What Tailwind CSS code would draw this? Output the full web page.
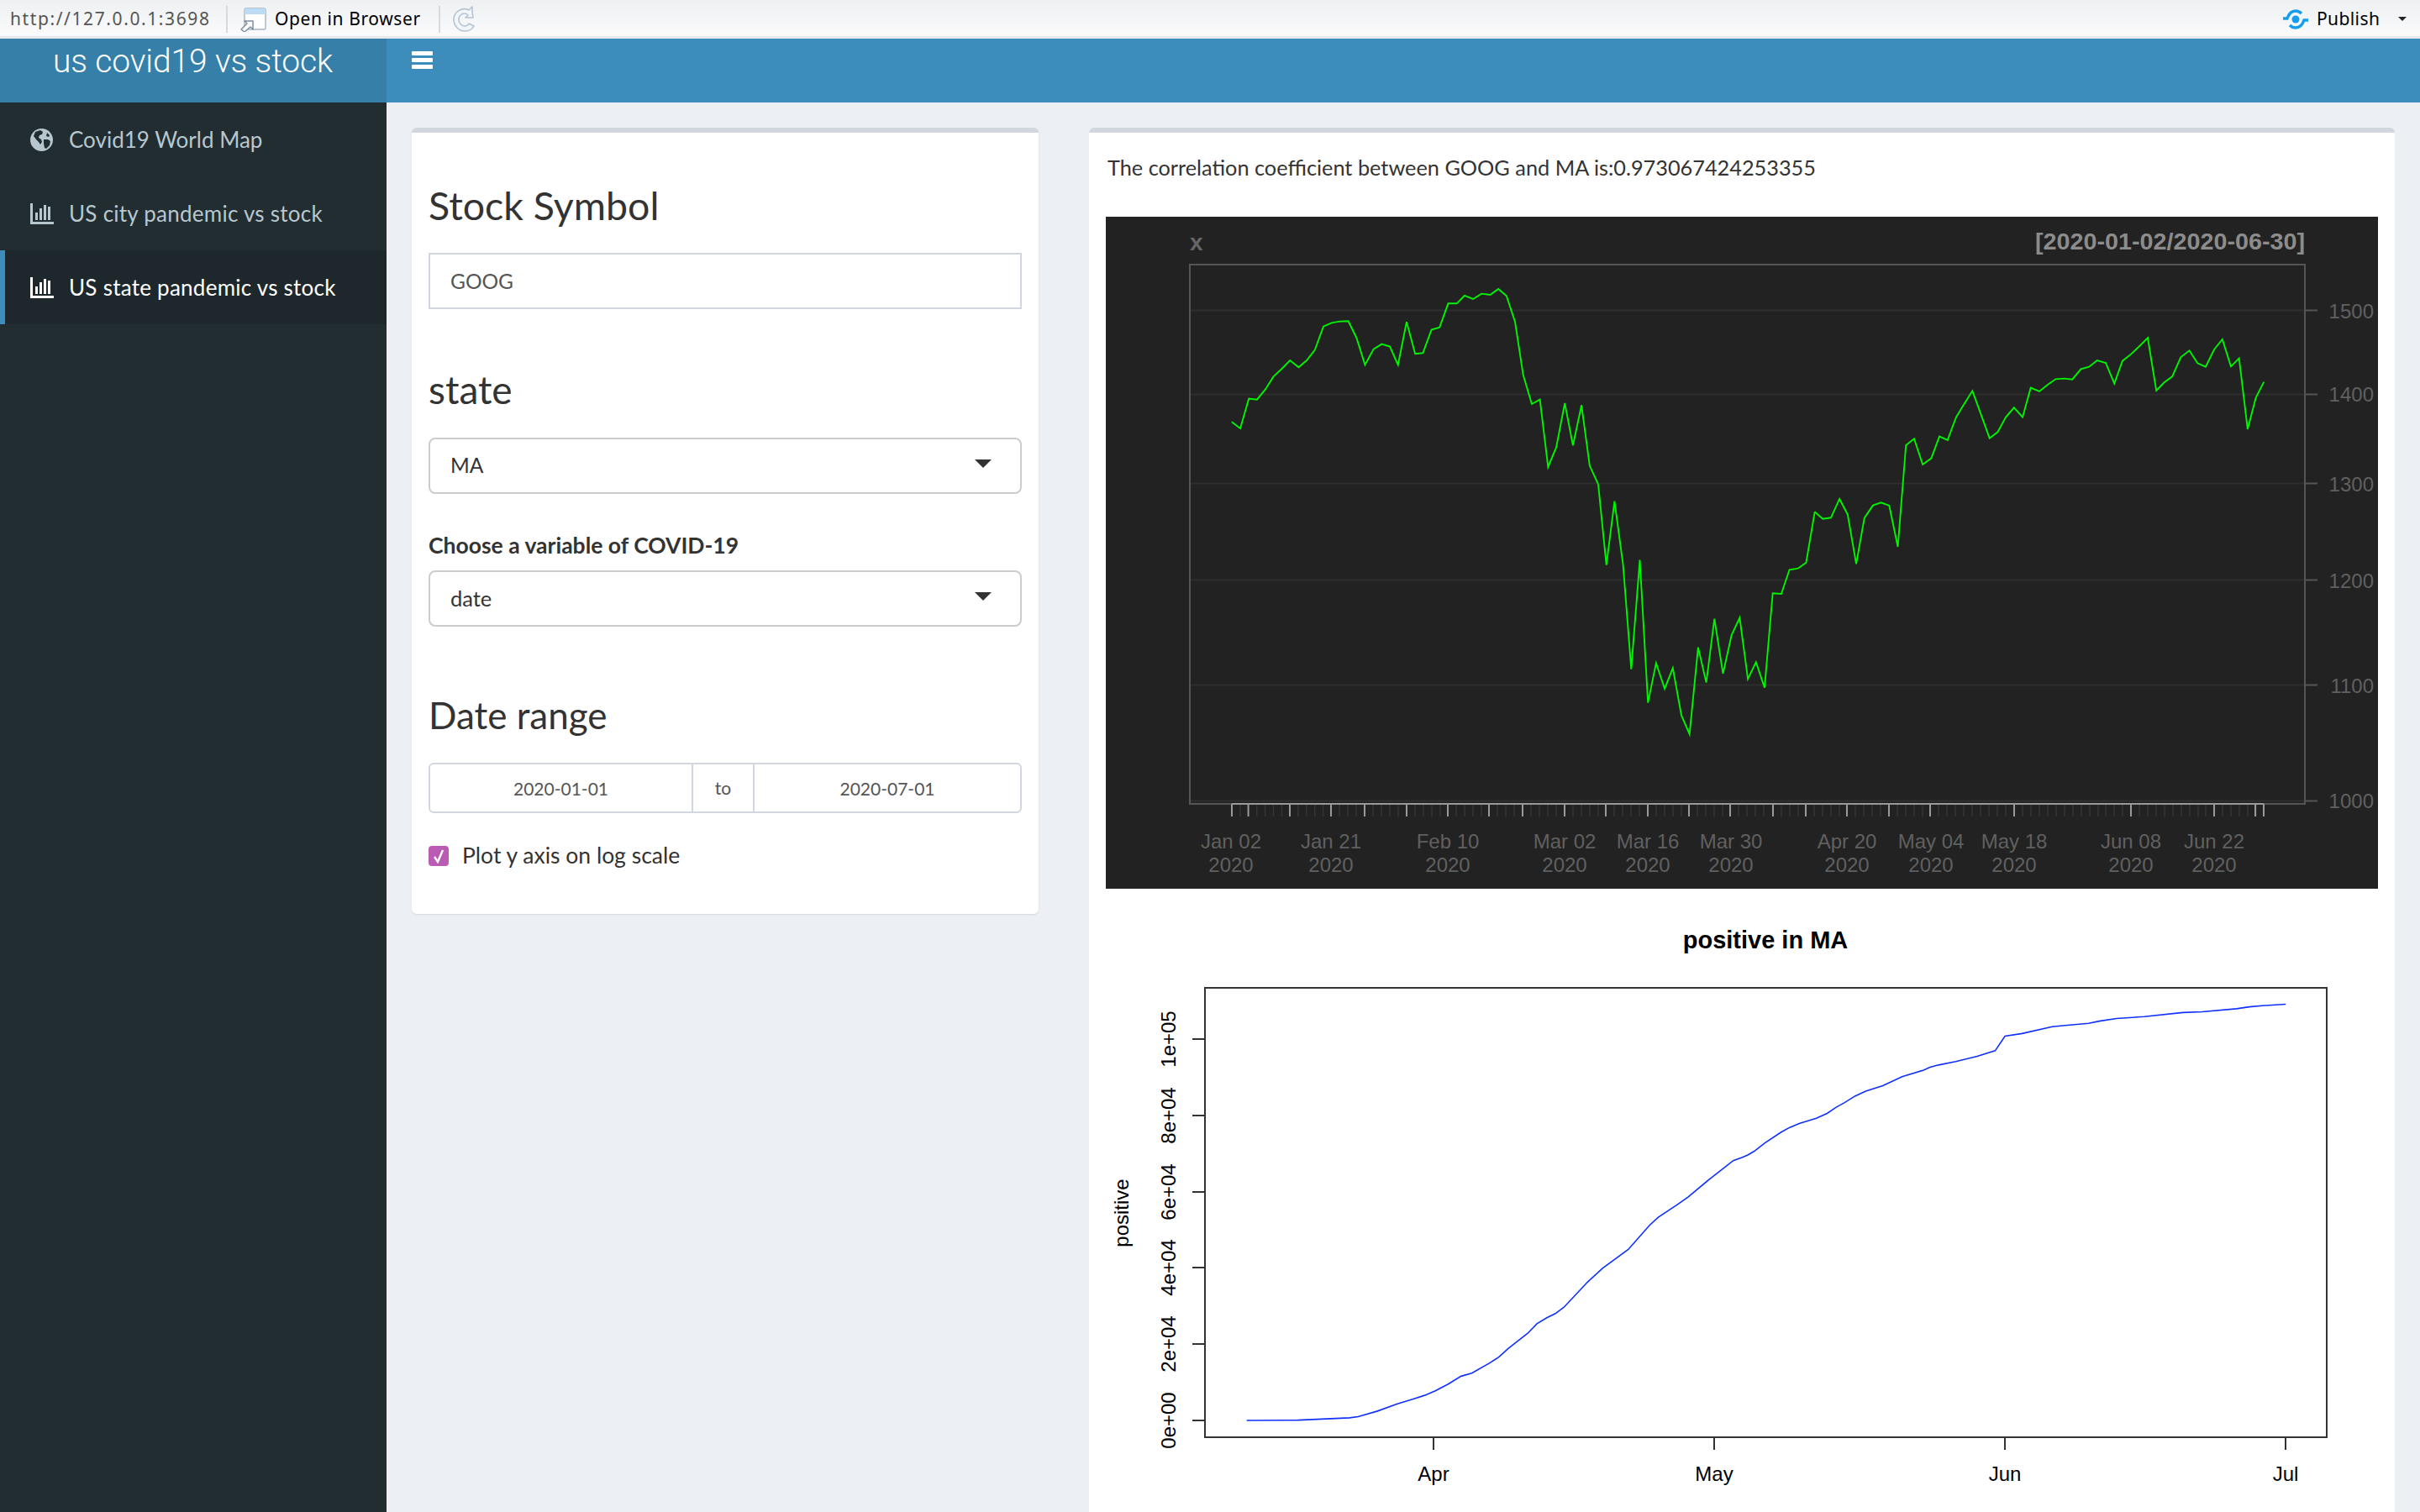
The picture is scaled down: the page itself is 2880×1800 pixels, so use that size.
<!DOCTYPE html>
<html lang="en">
<head>
  <meta charset="UTF-8">
  <title>us covid19 vs stock</title>
  <script src="https://cdn.jsdelivr.net/npm/@tailwindcss/browser@4"></script>
</head>
<body class="h-screen overflow-hidden bg-[#ecf0f5] font-['Lato',sans-serif] text-[#333]">
  <!-- RStudio viewer toolbar -->
  <div class="h-[46px] pt-[2px] flex items-center border-b-[3px] border-[#e8e9ea] bg-gradient-to-b from-[#eef0f2] to-[#fbfbfc] font-['Noto_Sans',sans-serif] text-[21px]">
    <span class="ml-[12px] w-[257px] text-[#555] tracking-[1.6px]">http://127.0.0.1:3698</span>
    <div class="w-[2px] h-[32px] bg-[#d8dadc]"></div>
    <svg class="ml-[15px] w-[32px] h-[30px]" viewBox="0 0 32 30">
      <rect x="5" y="2" width="25" height="25" rx="2" fill="#fff" stroke="#a9b6c4" stroke-width="1.5"/>
      <path d="M5 4a2 2 0 0 1 2-2h21a2 2 0 0 1 2 2v5H5z" fill="#bcdcf5"/>
      <path d="M1 27l7-7-3-3h10v10l-3-3-7 6z" fill="#fff" stroke="#7d8fa3" stroke-width="1.5" stroke-linejoin="round"/>
    </svg>
    <span class="ml-[9px] w-[195px] text-black tracking-[0.6px]">Open in Browser</span>
    <div class="w-[2px] h-[32px] bg-[#d8dadc]"></div>
    <svg class="ml-[13px] w-[30px] h-[32px]" viewBox="0 0 30 32">
      <path d="M25 7V1l-4 4C13 1 3 7 3 16c0 8 6 14 13 14 5 0 9-2 11-6l-6-3c-1 2-3 3-5 3-4 0-7-4-7-8s3-7 7-7c2 0 3 1 4 2l-3 3h9z" fill="#f3f6f9" stroke="#b4c4d4" stroke-width="1.6" stroke-linejoin="round"/>
    </svg>
    <div class="ml-auto flex items-center text-black">
      <svg class="w-[32px] h-[24px]" viewBox="0 0 32 24">
        <circle cx="16" cy="12" r="4.5" fill="#159ef0"/>
        <path d="M1 11h5C8 5 12 2 16 2c3 0 5 1 7 3M31 13h-5c-2 6-6 9-10 9-3 0-5-1-7-3" fill="none" stroke="#159ef0" stroke-width="3.4"/>
      </svg>
      <span class="ml-[9px] w-[97px] tracking-[0.4px]">Publish</span>
      <svg class="mr-[16px] w-[10px] h-[5px]" viewBox="0 0 10 5"><path d="M0 0h10L5 5z" fill="#222"/></svg>
    </div>
  </div>

  <!-- Header -->
  <header class="h-[76px] flex bg-[#3c8dbc]">
    <div class="w-[460px] bg-[#367fa9] pl-[63px] text-[39px] leading-[54px] font-['Roboto',sans-serif] font-light text-white tracking-[-0.13px]">us covid19 vs stock</div>
    <div class="ml-[30px] mt-[15px] w-[25px] h-[21px] flex flex-col justify-between">
      <div class="h-[5px] bg-white rounded-[1px]"></div>
      <div class="h-[5px] bg-white rounded-[1px]"></div>
      <div class="h-[5px] bg-white rounded-[1px]"></div>
    </div>
  </header>

  <div class="flex h-[1678px]">
    <!-- Sidebar -->
    <nav class="w-[460px] shrink-0 bg-[#222d32] text-[26px] text-[#b8c7ce]">
      <a class="h-[88px] pl-[36px] flex items-center">
        <svg class="w-[27px] h-[27px]" viewBox="0 0 27 27">
          <circle cx="13.5" cy="13.5" r="13.5" fill="#b8c7ce"/>
          <path d="M6 4l6-2 3 2-1 3-3 1-1 3 3 2 1 3-2 3-2-3-3-3-3-4zM16 13l5 0 3 2-1 5-4 4-2-1-1-5zM20 5l3 3-1 2-3-1z" fill="#222d32"/>
        </svg>
        <span class="ml-[19px]">Covid19 World Map</span>
      </a>
      <a class="h-[88px] pl-[36px] flex items-center">
        <svg class="w-[28px] h-[25px]" viewBox="0 0 28 25" fill="#b8c7ce">
          <path d="M0 0h3v22h25v3H0z"/><rect x="6" y="11" width="3" height="9"/><rect x="11" y="6" width="3" height="14"/><rect x="16" y="2" width="3" height="18"/><rect x="21" y="4" width="3" height="16"/>
        </svg>
        <span class="ml-[18px] tracking-[0.25px]">US city pandemic vs stock</span>
      </a>
      <a class="h-[88px] pl-[30px] flex items-center bg-[#1e282c] border-l-[6px] border-[#3c8dbc] text-white">
        <svg class="w-[28px] h-[25px]" viewBox="0 0 28 25" fill="#fff">
          <path d="M0 0h3v22h25v3H0z"/><rect x="6" y="11" width="3" height="9"/><rect x="11" y="6" width="3" height="14"/><rect x="16" y="2" width="3" height="18"/><rect x="21" y="4" width="3" height="16"/>
        </svg>
        <span class="ml-[18px] tracking-[0.25px]">US state pandemic vs stock</span>
      </a>
    </nav>

    <main class="flex-1 flex items-start gap-[60px] pt-[30px] pl-[30px] h-full">
      <!-- Inputs -->
      <section class="w-[746px] h-[936px] px-[20px] pt-[58px] rounded-[6px] border-t-[6px] border-[#d2d6de] bg-white shadow-[0_1px_2px_rgba(0,0,0,0.1)]">
        <h3 class="h-[56px] text-[46.5px] leading-[56px]">Stock Symbol</h3>
        <div class="mt-[29px] h-[67px] pl-[24px] pt-[1px] flex items-center border-2 border-[#d2d6de] text-[24.5px] text-[#555]">GOOG</div>

        <h3 class="mt-[68px] h-[56px] text-[46px] leading-[56px]">state</h3>
        <div class="mt-[29px] h-[67px] px-[24px] flex items-center justify-between rounded-[8px] border-2 border-[#cccccc] text-[24.5px]">
          MA
          <svg class="w-[20px] h-[10px] mr-[10px] mb-[5px]" viewBox="0 0 20 10"><path d="M0 0h20L10 10z" fill="#333"/></svg>
        </div>

        <label class="block mt-[44px] h-[34px] text-[26.5px] leading-[34px] font-bold">Choose a variable of COVID-19</label>
        <div class="mt-[13px] h-[67px] px-[24px] flex items-center justify-between rounded-[8px] border-2 border-[#cccccc] text-[25.5px]">
          date
          <svg class="w-[20px] h-[10px] mr-[10px] mb-[5px]" viewBox="0 0 20 10"><path d="M0 0h20L10 10z" fill="#333"/></svg>
        </div>

        <h3 class="mt-[77px] h-[56px] text-[44px] leading-[56px]">Date range</h3>
        <div class="mt-[29px] h-[60px] pt-[2px] flex rounded-[6px] border-2 border-[#d2d6de] text-[21px] text-[#555]">
          <div class="w-[311px] flex items-center justify-center">2020-01-01</div>
          <div class="w-[75px] -mt-[2px] flex items-center justify-center border-x-2 border-[#d2d6de]">to</div>
          <div class="flex-1 flex items-center justify-center">2020-07-01</div>
        </div>
        <div class="mt-[31px] flex items-center">
          <div class="w-[24px] h-[24px] flex items-center justify-center rounded-[4px] bg-[#ba5cb4]">
            <svg class="w-[14px] h-[18px]" viewBox="0 0 14 18"><path d="M2 10l4 6 6-14" fill="none" stroke="#fff" stroke-width="2.4"/></svg>
          </div>
          <span class="ml-[16px] text-[26.5px]">Plot y axis on log scale</span>
        </div>
      </section>

      <!-- Plots -->
      <section class="w-[1554px] h-[1648px] px-[20px] rounded-t-[6px] border-t-[6px] border-[#d2d6de] bg-white">
        <p class="h-[100px] pt-[21px] pl-[2px] text-[25.3px] leading-[40px]">The correlation coefficient between GOOG and MA is:0.973067424253355</p>

        <svg class="block w-[1514px] h-[800px] bg-[#222222]" viewBox="1316 258 1514 800" font-family="Liberation Sans, sans-serif" font-size="24" fill="#606060">
          <g stroke="#2e2e2e" stroke-width="2">
            <path d="M1416 369.5H2743M1416 469.5H2743M1416 575.5H2743M1416 690.5H2743M1416 815.5H2743M1416 953.5H2743"/>
          </g>
          <rect x="1416" y="315" width="1327" height="642" fill="none" stroke="#555" stroke-width="2"/>
          <path d="M2743 369.5h15M2743 469.5h15M2743 575.5h15M2743 690.5h15M2743 815.5h15M2743 953.5h15" stroke="#555" stroke-width="2"/>
          <!-- daily ticks -->
          <path d="M1466 957v15M1475.9 957v15M1495.7 957v15M1505.6 957v15M1515.5 957v15M1525.4 957v15M1544.9 957v15M1554.8 957v15M1564.7 957v15M1574.6 957v15M1594 957v15M1604 957v15M1614 957v15M1634 957v15M1644 957v15M1654 957v15M1664 957v15M1684 957v15M1694 957v15M1704 957v15M1714 957v15M1733 957v15M1743 957v15M1753 957v15M1763 957v15M1782 957v15M1792 957v15M1802 957v15M1822 957v15M1832 957v15M1842 957v15M1852 957v15M1872 957v15M1882 957v15M1892 957v15M1902 957v15M1921 957v15M1931 957v15M1941 957v15M1951 957v15M1971 957v15M1981 957v15M1991 957v15M2001 957v15M2020 957v15M2030 957v15M2040 957v15M2050 957v15M2069 957v15M2079 957v15M2089 957v15M2099 957v15M2120 957v15M2130 957v15M2140 957v15M2159 957v15M2169 957v15M2179 957v15M2189 957v15M2208 957v15M2218 957v15M2228 957v15M2238 957v15M2258 957v15M2268 957v15M2278 957v15M2288 957v15M2307 957v15M2317 957v15M2327 957v15M2337 957v15M2347 957v15M2357 957v15M2367 957v15M2377 957v15M2387 957v15M2407 957v15M2417 957v15M2427 957v15M2437 957v15M2447 957v15M2457 957v15M2467 957v15M2477 957v15M2487 957v15M2497 957v15M2506 957v15M2516 957v15M2526 957v15M2546 957v15M2556 957v15M2566 957v15M2576 957v15M2586 957v15M2596 957v15M2606 957v15M2616 957v15M2625 957v15M2645 957v15M2655 957v15M2665 957v15M2675 957v15M2685 957v15" stroke="#353535" stroke-width="1.5"/>
          <path d="M1466 957H2694" stroke="#999" stroke-width="2"/>
          <path d="M1466 957v15M1485.6 957v15M1535 957v15M1584 957v15M1624 957v15M1674 957v15M1723 957v15M1772 957v15M1812 957v15M1862 957v15M1911 957v15M1961 957v15M2010 957v15M2059 957v15M2110 957v15M2149 957v15M2198 957v15M2248 957v15M2297 957v15M2397 957v15M2536 957v15M2635 957v15M2684 957v15M2694 957v15" stroke="#999" stroke-width="2"/>

          <!-- GOOG close -->
          <g fill="none" stroke="#00f500" stroke-width="1.9" stroke-linejoin="miter">
            <polyline vector-effect="non-scaling-stroke" transform="translate(1300 150) scale(.5102 .3333)" points="325,1057 345,1080 365,974 384,977 403,942 422,896 442,867 461,837 481,862 500,837 519,800 539,716 558,703 577,698 597,697 616,756 636,853 656,797 675,779 694,788 713,853 733,700 753,814 771,811 791,728 810,719 830,634 850,634 868,606 888,618 908,599 928,603 947,582 966,607 986,700 1005,890 1025,993 1044,977 1063,1218 1082,1148 1102,990 1121,1141 1141,997 1160,1213 1180,1280"/>
            <polyline vector-effect="non-scaling-stroke" transform="translate(1400 500) scale(.5102 .3333)" points="984,230 1003,518 1022,290 1042,518 1061,890 1081,500 1100,1010 1119,868 1139,960 1158,886 1178,1055 1197,1122 1217,812 1236,938 1255,710 1275,906 1295,768 1314,706 1333,925 1352,865 1372,956 1391,619 1411,621 1430,535 1450,530 1469,509 1489,328"/>
            <polyline vector-effect="non-scaling-stroke" transform="translate(2080 240) scale(.5102 .3333)" points="156,1108 175,1133 194,1129 214,1062 233,1118 253,1294 272,1130 292,1085 311,1075 330,1086 350,1233 369,870 388,847 408,939 428,917 447,839 466,852 486,770 505,722 524,676 544,760 564,845 583,823 602,770 621,736 641,770 660,665 680,678 699,655 718,634 738,632 757,635 777,598 796,590 815,567 835,576 855,650 874,569 894,545 913,517 933,487 953,675 972,645 990,625 1010,556 1030,532 1049,577 1068,590 1088,528 1107,492 1127,589 1146,560 1166,813 1185,701 1204,644"/>
          </g>

          <text x="1416" y="298" font-weight="700" font-size="28" fill="#666">x</text>
          <text x="2743" y="297" text-anchor="end" font-weight="700" font-size="28" fill="#8c8c8c" textLength="321" lengthAdjust="spacingAndGlyphs">[2020-01-02/2020-06-30]</text>
          <g text-anchor="end" font-size="24">
            <text x="2825" y="379">1500</text><text x="2825" y="478">1400</text><text x="2825" y="585">1300</text><text x="2825" y="700">1200</text><text x="2825" y="825">1100</text><text x="2825" y="962">1000</text>
          </g>
          <g text-anchor="middle">
            <text x="1465" y="1010">Jan 02</text><text x="1465" y="1038">2020</text>
            <text x="1584" y="1010">Jan 21</text><text x="1584" y="1038">2020</text>
            <text x="1723" y="1010">Feb 10</text><text x="1723" y="1038">2020</text>
            <text x="1862" y="1010">Mar 02</text><text x="1862" y="1038">2020</text>
            <text x="1961" y="1010">Mar 16</text><text x="1961" y="1038">2020</text>
            <text x="2060" y="1010">Mar 30</text><text x="2060" y="1038">2020</text>
            <text x="2198" y="1010">Apr 20</text><text x="2198" y="1038">2020</text>
            <text x="2298" y="1010">May 04</text><text x="2298" y="1038">2020</text>
            <text x="2397" y="1010">May 18</text><text x="2397" y="1038">2020</text>
            <text x="2536" y="1010">Jun 08</text><text x="2536" y="1038">2020</text>
            <text x="2635" y="1010">Jun 22</text><text x="2635" y="1038">2020</text>
          </g>
        </svg>

        <svg class="block w-[1514px] h-[742px]" viewBox="1316 1058 1514 742" font-family="Liberation Sans, sans-serif" font-size="24" fill="#000">
          <text x="2101" y="1129" text-anchor="middle" font-weight="700" font-size="29">positive in MA</text>
          <rect x="1434" y="1176" width="1335" height="535" fill="none" stroke="#333" stroke-width="2"/>
          <path d="M1419 1237h15M1419 1328h15M1419 1419h15M1419 1509h15M1419 1600h15M1419 1691h15M1706 1711v15M2040 1711v15M2386 1711v15M2720 1711v15" stroke="#333" stroke-width="2"/>
          <g fill="none" stroke="#1030ff" stroke-width="1.6">
            <polyline vector-effect="non-scaling-stroke" transform="translate(1300 1100) scale(.5102 .4464)" points="360,1324 480,1323 600,1317 620,1314 665,1299 710,1280 750,1266 775,1257 800,1245 830,1227 860,1206 885,1198 925,1172 948,1155 970,1132 1015,1092 1037,1066 1060,1050 1080,1039 1100,1022 1155,955 1190,918 1250,868 1300,803 1320,782 1365,748 1390,728 1440,680 1495,631 1515,623 1529,616"/>
            <polyline vector-effect="non-scaling-stroke" transform="translate(2080 1100) scale(.5102 .4464)" points="0,616 15,606 40,584 78,555 97,543 120,532 160,518 185,505 207,488 225,477 250,459 275,446 315,431 360,407 410,390 425,382 445,376 485,367 535,353 577,338 600,299 640,292 710,274 735,271 795,265 820,259 860,252 925,247 1015,236 1060,234 1140,226 1170,221 1200,218 1255,214"/>
          </g>
          <g text-anchor="middle">
            <text transform="translate(1399 1237) rotate(-90)">1e+05</text>
            <text transform="translate(1399 1328) rotate(-90)">8e+04</text>
            <text transform="translate(1399 1419) rotate(-90)">6e+04</text>
            <text transform="translate(1399 1509) rotate(-90)">4e+04</text>
            <text transform="translate(1399 1600) rotate(-90)">2e+04</text>
            <text transform="translate(1399 1691) rotate(-90)">0e+00</text>
            <text transform="translate(1343 1444) rotate(-90)">positive</text>
            <text x="1706" y="1763">Apr</text><text x="2040" y="1763">May</text><text x="2386" y="1763">Jun</text><text x="2720" y="1763">Jul</text>
          </g>
        </svg>
      </section>
    </main>
  </div>
</body>
</html>
